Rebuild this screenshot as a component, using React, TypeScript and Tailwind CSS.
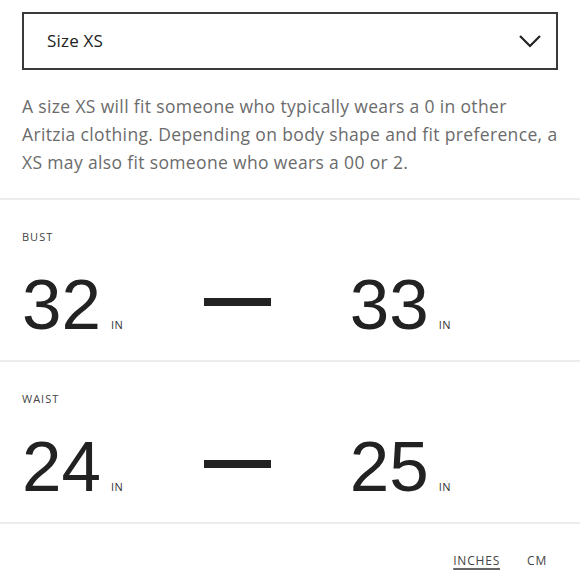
import React from 'react';

type Range = { label: string; from: string; to: string };

const ranges: Range[] = [
  { label: 'BUST', from: '32', to: '33' },
  { label: 'WAIST', from: '24', to: '25' },
];

const Value = ({ n }: { n: string }) => (
  <div className="flex items-baseline">
    <span className="font-['Liberation_Sans',Arial,sans-serif] text-[71px] leading-[71px] text-[#222]">{n}</span>
    <span className="ml-[10px] text-[11px] tracking-[0.5px] text-[#333]">IN</span>
  </div>
);

export default function App() {
  return (
    <div className="w-[580px] h-[580px] bg-white overflow-hidden font-['Open_Sans',sans-serif]">
      <div className="px-[22px] pt-[12px]">
        <button className="w-full h-[58px] border-2 border-[#3a3a3a] flex items-center justify-between pl-[23px] pr-[14px]">
          <span className="text-[17px] tracking-[0.2px] text-[#222]">Size XS</span>
          <svg width="24" height="14" viewBox="0 0 24 14" fill="none">
            <path d="M2 2l10 10L22 2" stroke="#222" strokeWidth="2.2" />
          </svg>
        </button>
        <p className="mt-[22px] whitespace-nowrap text-[17.5px] leading-[28px] tracking-[0.35px] text-[#6b6b6b]">
          A size XS will fit someone who typically wears a 0 in other
          <br />
          Aritzia clothing. Depending on body shape and fit preference, a
          <br />
          XS may also fit someone who wears a 00 or 2.
        </p>
      </div>

      <div className="mt-[22px] h-[2px] bg-[#ececec]" />

      {ranges.map((r) => (
        <div key={r.label}>
          <div className="px-[22px] pt-[29px] pb-[20px]">
            <div className="text-[11px] leading-[16px] tracking-[1px] text-[#444]">{r.label}</div>
            <div className="mt-[24px] flex items-center">
              <div className="w-[182px]">
                <Value n={r.from} />
              </div>
              <div className="w-[67px] h-[8px] bg-[#222] -mt-[6px]" />
              <div className="w-[180px] flex justify-end">
                <Value n={r.to} />
              </div>
            </div>
          </div>
          <div className="h-[2px] bg-[#ececec]" />
        </div>
      ))}

      <div className="flex justify-end items-center gap-[27px] pr-[33px] pt-[28px] text-[12px] tracking-[0.8px] text-[#444]">
        <span className="underline decoration-2 decoration-[#666] underline-offset-[3px]">INCHES</span>
        <span>CM</span>
      </div>
    </div>
  );
}
